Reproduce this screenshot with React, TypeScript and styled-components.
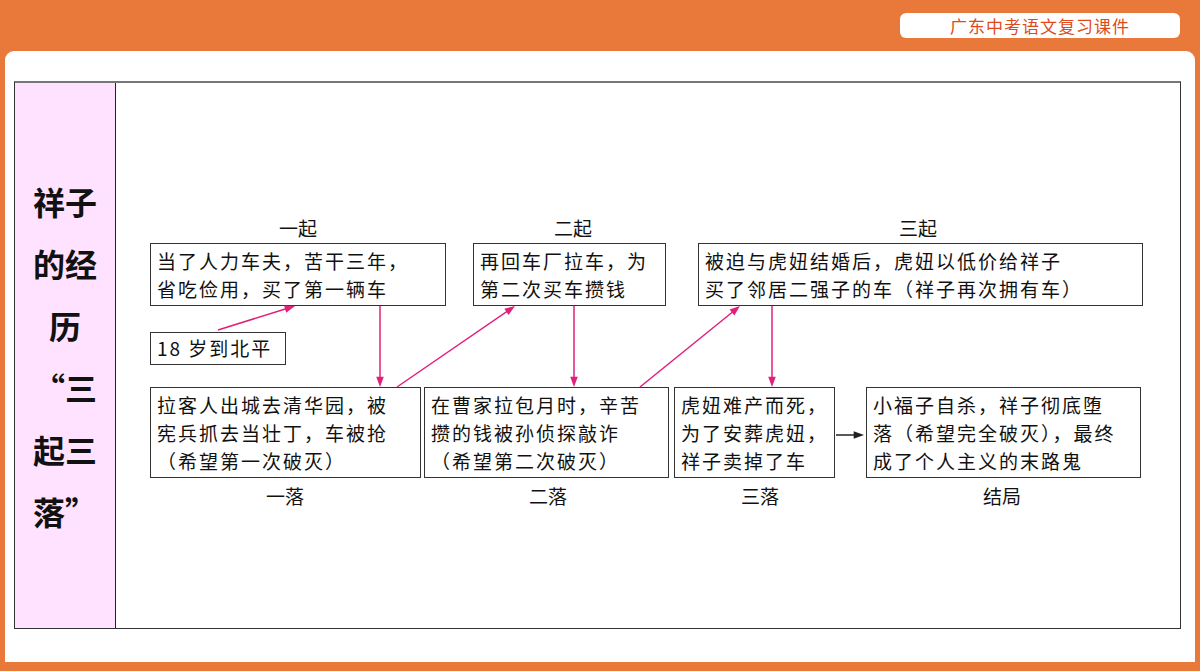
import React from 'react';
import styled, { createGlobalStyle } from 'styled-components';

const Global = createGlobalStyle`
  html, body { margin: 0; padding: 0; }
  body {
    background: #e8793b;
    font-family: "Liberation Serif", "Noto Sans CJK SC", serif;
  }
`;

const Page = styled.div`
  width: 1200px;
  height: 671px;
  display: flex;
  flex-direction: column;
  overflow: hidden;
`;

const TopBar = styled.div`
  height: 51px;
  display: flex;
  justify-content: flex-end;
  align-items: flex-start;
  padding: 13px 20px 0 0;
  box-sizing: border-box;
`;

const Badge = styled.div`
  width: 280px;
  height: 25px;
  border-radius: 6px;
  background: #fff;
  color: #e04a1a;
  font-family: "Noto Sans CJK SC", sans-serif;
  font-size: 17px;
  line-height: 25px;
  text-align: center;
  letter-spacing: 1px;
`;

const Panel = styled.div`
  margin: 0 5px;
  height: 611px;
  background: #fff;
  border-radius: 9px 9px 0 0;
  padding: 30px 14px 0 9px;
  box-sizing: border-box;
`;

const Table = styled.div`
  display: flex;
  height: 545px;
  border: 1px solid #333;
  border-top: 2px solid #777;
`;

const Side = styled.div`
  width: 100px;
  background: #ffe2ff;
  border-right: 1px solid #222;
  display: flex;
  flex-direction: column;
  justify-content: center;
  align-items: center;
  font-family: "Noto Sans CJK SC", sans-serif;
  font-weight: 700;
  font-size: 32px;
  line-height: 62px;
  color: #111;
  text-align: center;
`;

const Canvas = styled.div`
  position: relative;
  flex: 1;
`;

const Node = styled.div<{ x: number; y: number; w: number; h: number }>`
  position: absolute;
  left: ${p => p.x - 116}px;
  top: ${p => p.y - 83}px;
  width: ${p => p.w}px;
  height: ${p => p.h}px;
  box-sizing: border-box;
  border: 1.5px solid #333;
  padding: 3px 6px;
  font-family: "Noto Sans CJK SC", serif;
  font-size: 19px;
  line-height: 28px;
  letter-spacing: 2px;
  color: #111;
  white-space: nowrap;
  background: #fff;
`;

const Label = styled.div<{ x: number; y: number }>`
  position: absolute;
  left: ${p => p.x - 116 - 40}px;
  top: ${p => p.y - 83 - 12}px;
  width: 80px;
  text-align: center;
  font-family: "Noto Sans CJK SC", serif;
  font-size: 19px;
  line-height: 24px;
  color: #111;
`;

const Arrows = styled.svg`
  position: absolute;
  left: 0;
  top: 0;
  width: 100%;
  height: 100%;
  pointer-events: none;
`;

const arrows: [number, number, number, number, string][] = [
  [218, 330, 295, 306, '#e0207a'],
  [380, 306, 380, 387, '#e0207a'],
  [397, 387, 515, 306, '#e0207a'],
  [574, 306, 574, 387, '#e0207a'],
  [640, 387, 740, 306, '#e0207a'],
  [772, 306, 772, 387, '#e0207a'],
  [836, 435, 864, 435, '#222'],
];

export default function App() {
  return (
    <Page>
      <Global />
      <TopBar>
        <Badge>广东中考语文复习课件</Badge>
      </TopBar>
      <Panel>
        <Table>
          <Side>
            <div>祥子</div>
            <div>的经</div>
            <div>历</div>
            <div>“三</div>
            <div>起三</div>
            <div>落”</div>
          </Side>
          <Canvas>
            <Label x={298} y={228}>一起</Label>
            <Label x={573} y={228}>二起</Label>
            <Label x={918} y={228}>三起</Label>
            <Node x={150} y={243} w={296} h={63}>当了人力车夫，苦干三年，<br />省吃俭用，买了第一辆车</Node>
            <Node x={150} y={332} w={136} h={33} style={{ padding: '1px 6px' }}>18 岁到北平</Node>
            <Node x={473} y={243} w={193} h={63}>再回车厂拉车，为<br />第二次买车攒钱</Node>
            <Node x={698} y={243} w={445} h={63}>被迫与虎妞结婚后，虎妞以低价给祥子<br />买了邻居二强子的车（祥子再次拥有车）</Node>
            <Node x={150} y={387} w={271} h={91}>拉客人出城去清华园，被<br />宪兵抓去当壮丁，车被抢<br />（希望第一次破灭）</Node>
            <Node x={424} y={387} w={245} h={91}>在曹家拉包月时，辛苦<br />攒的钱被孙侦探敲诈<br />（希望第二次破灭）</Node>
            <Node x={674} y={387} w={161} h={91}>虎妞难产而死，<br />为了安葬虎妞，<br />祥子卖掉了车</Node>
            <Node x={866} y={387} w={275} h={91}>小福子自杀，祥子彻底堕<br />落（希望完全破灭），最终<br />成了个人主义的末路鬼</Node>
            <Label x={285} y={496}>一落</Label>
            <Label x={548} y={496}>二落</Label>
            <Label x={760} y={496}>三落</Label>
            <Label x={1002} y={496}>结局</Label>
            <Arrows>
              {arrows.map(([x1, y1, x2, y2, c], i) => {
                const ax = x1 - 116, ay = y1 - 83, bx = x2 - 116, by = y2 - 83;
                const ang = Math.atan2(by - ay, bx - ax);
                const L = 11, s = 0.35;
                const p1 = [bx - L * Math.cos(ang - s), by - L * Math.sin(ang - s)];
                const p2 = [bx - L * Math.cos(ang + s), by - L * Math.sin(ang + s)];
                return (
                  <g key={i} stroke={c} fill={c}>
                    <line x1={ax} y1={ay} x2={bx - 6 * Math.cos(ang)} y2={by - 6 * Math.sin(ang)} strokeWidth={1.5} />
                    <polygon points={`${bx},${by} ${p1[0]},${p1[1]} ${p2[0]},${p2[1]}`} stroke="none" />
                  </g>
                );
              })}
            </Arrows>
          </Canvas>
        </Table>
      </Panel>
    </Page>
  );
}
